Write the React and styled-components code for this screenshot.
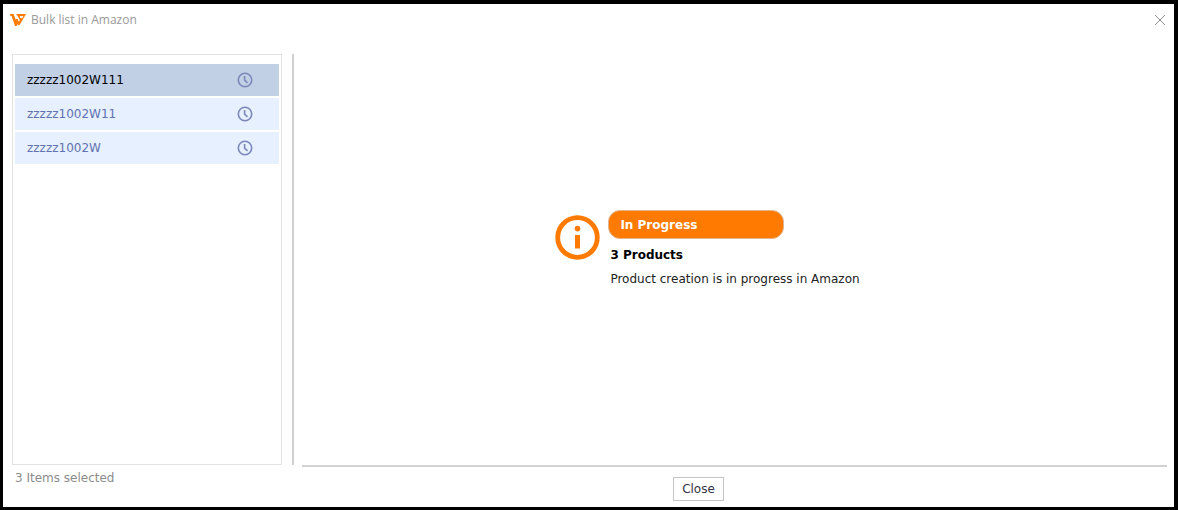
import React, { useState } from "react";
import styled, { createGlobalStyle } from "styled-components";

const GlobalStyle = createGlobalStyle`
  * { box-sizing: border-box; }
  body { margin: 0; background: #000; }
  body, button { font-family: "DejaVu Sans", Verdana, sans-serif; font-size: 12px; line-height: 16px; }
`;

const Dialog = styled.div`
  min-height: 100vh;
  display: flex;
  flex-direction: column;
  background: #fff;
  border: solid #000;
  border-width: 4px 4px 3px 3px;
`;

const TitleBar = styled.header`
  display: flex;
  align-items: center;
  gap: 5px;
  height: 32px;
  margin-bottom: 18px;
  padding: 0 8px 0 7px;
`;

const Logo = styled.svg`
  width: 16px;
  height: 12px;
`;

const Title = styled.h1`
  flex: 1;
  margin: 0;
  color: #999;
  font: 400 12px/16px "Open Sans", "Noto Sans", sans-serif;
`;

const CloseIcon = styled.button`
  display: flex;
  padding: 0;
  border: 0;
  background: none;
  cursor: pointer;
`;

const Body = styled.div`
  flex: 1;
  display: grid;
  grid-template-columns: 270px 1fr;
  grid-template-rows: 1fr 42px;
  column-gap: 10px;
  padding: 0 7px 0 9px;
`;

const ProductList = styled.ul`
  display: flex;
  flex-direction: column;
  gap: 2px;
  margin: 0;
  padding: 9px 2px;
  border: 1px solid #e2e2e2;
  list-style: none;
`;

const ProductRow = styled.button`
  display: flex;
  align-items: center;
  justify-content: space-between;
  width: 100%;
  height: 32px;
  padding: 0 26px 0 12px;
  border: 0;
  background: ${({ $active }) => ($active ? "#c2d0e6" : "#e6f0ff")};
  color: ${({ $active }) => ($active ? "#000" : "#6272b0")};
  text-align: left;
  cursor: pointer;
`;

const Detail = styled.main`
  display: flex;
  align-items: center;
  justify-content: center;
  border-left: 2px solid #d0d0d3;
  padding: 0 46px 22px 0;
`;

const Status = styled.section`
  display: flex;
  align-items: flex-start;
  gap: 8px;
`;

const InfoIcon = styled.svg`
  width: 45px;
  height: 45px;
  margin-top: 5px;
`;

const StatusText = styled.div`
  display: flex;
  flex-direction: column;
  gap: 8px;
`;

const Pill = styled.strong`
  width: 176px;
  padding: 6px 11px 5px;
  border: 1px solid #e0b48c;
  border-radius: 12px;
  background: #ff7a00;
  color: #fff;
`;

const Line = styled.p`
  margin: 0;
  padding-left: 2px;
  color: ${({ $strong }) => ($strong ? "#000" : "#222")};
  font-weight: ${({ $strong }) => ($strong ? 700 : 400)};
`;

const Selected = styled.p`
  margin: 0;
  padding: 5px 3px;
  color: #8c8c8c;
`;

const Footer = styled.footer`
  display: flex;
  align-items: flex-start;
  justify-content: center;
  margin-left: 10px;
  padding: 10px 72px 0 0;
  border-top: 2px solid #d2d2d2;
`;

const CloseButton = styled.button`
  height: 24px;
  padding: 0 8px;
  border: 1px solid #c4c4c4;
  background: #fff;
  color: #333344;
  cursor: pointer;
`;

const Clock = () => (
  <svg width="16" height="16" viewBox="0 0 16 16" fill="none" stroke="#7c88ba" strokeWidth="1.6" aria-hidden="true">
    <circle cx="8" cy="8" r="6.7" />
    <path d="M7.6 4v4.2l2.9 2.6" />
  </svg>
);

const products = ["zzzzz1002W111", "zzzzz1002W11", "zzzzz1002W"];

export default function App() {
  const [active, setActive] = useState(0);
  return (
    <>
      <GlobalStyle />
      <Dialog role="dialog" aria-labelledby="title">
        <TitleBar>
          <Logo viewBox="0 0 16 12" fill="#ff7a00" fillRule="evenodd" aria-hidden="true">
            <path d="M0 0h3.4l2.9 7 .9-2.2 1.3 2.8L6.6 12H5L1.6 2H.6z" />
            <path d="M6 0h10L9.6 11 8 11.4 5.6 5h1.8l1.4 3 1-2L7.6 2zM9.6 1.9l1 2.3h1.6l1.2-2.3z" />
          </Logo>
          <Title id="title">Bulk list in Amazon</Title>
          <CloseIcon aria-label="Close window">
            <svg width="12" height="12" viewBox="0 0 12 12" stroke="#8e8e8e" aria-hidden="true">
              <path d="M1 1l10 10M11 1L1 11" />
            </svg>
          </CloseIcon>
        </TitleBar>
        <Body>
          <ProductList>
            {products.map((name, i) => (
              <li key={name}>
                <ProductRow $active={i === active} onClick={() => setActive(i)}>
                  {name}
                  <Clock />
                </ProductRow>
              </li>
            ))}
          </ProductList>
          <Detail>
            <Status>
              <InfoIcon viewBox="0 0 45 45" fill="#ff7a00" aria-hidden="true">
                <circle cx="22.5" cy="22.5" r="19.8" fill="none" stroke="#ff7a00" strokeWidth="4.8" />
                <circle cx="22.5" cy="13.6" r="2.8" />
                <path d="M20 20h5v13.5h-5z" />
              </InfoIcon>
              <StatusText>
                <Pill>In Progress</Pill>
                <Line $strong>3 Products</Line>
                <Line>Product creation is in progress in Amazon</Line>
              </StatusText>
            </Status>
          </Detail>
          <Selected>3 Items selected</Selected>
          <Footer>
            <CloseButton>Close</CloseButton>
          </Footer>
        </Body>
      </Dialog>
    </>
  );
}
